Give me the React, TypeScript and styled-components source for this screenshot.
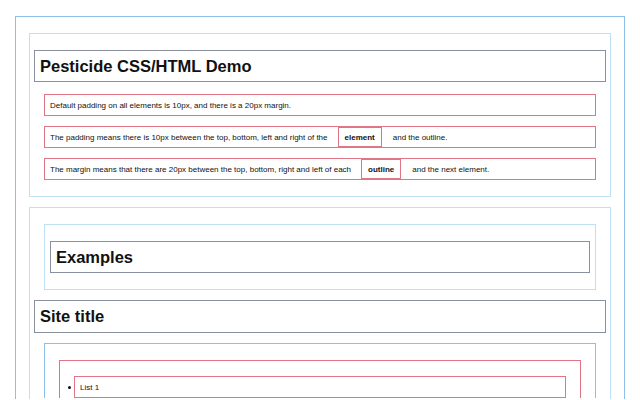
import React from "react";
import styled, { createGlobalStyle } from "styled-components";

const G = createGlobalStyle`
  body { margin: 0; background: #fff; font-family: "Liberation Sans", Arial, sans-serif; color: #111; }
`;
const Outer = styled.div`
  margin: 16px 15px 0; border: 1px solid #8cc0e8; border-bottom: none;
  padding: 16px 13px 0; height: 383px; box-sizing: border-box; overflow: hidden;
`;
const Section = styled.div<{ $mt?: number }>`
  border: 1px solid #bfe0f2; padding: 16px 4px; margin-top: ${p => p.$mt ?? 0}px;
`;
const Heading = styled.div<{ $size: number; $h: number }>`
  border: 1px solid #8a90a0; height: ${p => p.$h}px; display: flex; align-items: center;
  padding-left: 5px; font-weight: bold; font-size: ${p => p.$size}px;
`;
const Para = styled.div<{ $mt: number }>`
  border: 1px solid #e07585; height: 20px; margin: ${p => p.$mt}px 10px 0; padding-left: 5px;
  display: flex; align-items: stretch; font-size: 8px; white-space: pre;
  & > span { display: flex; align-items: center; }
`;
const Inline = styled.b`
  border: 1px solid #e07585; padding: 0 6px; margin: 0 11px 0 10px; display: flex; align-items: center;
`;
const Wrap = styled.div`
  border: 1px solid #bfe0f2; margin: 0 10px 10px; padding: 16px 5px;
`;
const Nav = styled.div`
  border: 1px solid #8cc0e8; border-bottom: none; margin: 10px 10px 0; padding: 16px 14px 0;
`;
const List = styled.ul`
  border: 1px solid #e07585; border-bottom: none; margin: 0; padding: 15px 14px 0; list-style: none;
`;
const Item = styled.li`
  border: 1px solid #e07585; height: 20px; display: flex; align-items: center; padding-left: 5px;
  font-size: 8px; position: relative;
  &::before { content: ""; position: absolute; left: -7px; top: 9px; width: 3px; height: 3px; border-radius: 50%; background: #111; }
`;

export default function App() {
  return (
    <>
      <G />
      <Outer>
        <Section>
          <Heading $size={16.5} $h={30}>Pesticide CSS/HTML Demo</Heading>
          <Para $mt={12}><span>Default padding on all elements is 10px, and there is a 20px margin.</span></Para>
          <Para $mt={10}><span>The padding means there is 10px between the top, bottom, left and right of the</span><Inline>element</Inline><span>and the outline.</span></Para>
          <Para $mt={10}><span>The margin means that there are 20px between the top, bottom, right and left of each</span><Inline>outline</Inline><span>and the next element.</span></Para>
        </Section>
        <Section $mt={10}>
          <Wrap>
            <Heading $size={16.5} $h={30}>Examples</Heading>
          </Wrap>
          <Heading $size={16.5} $h={31}>Site title</Heading>
          <Nav>
            <List>
              <Item>List 1</Item>
            </List>
          </Nav>
        </Section>
      </Outer>
    </>
  );
}
